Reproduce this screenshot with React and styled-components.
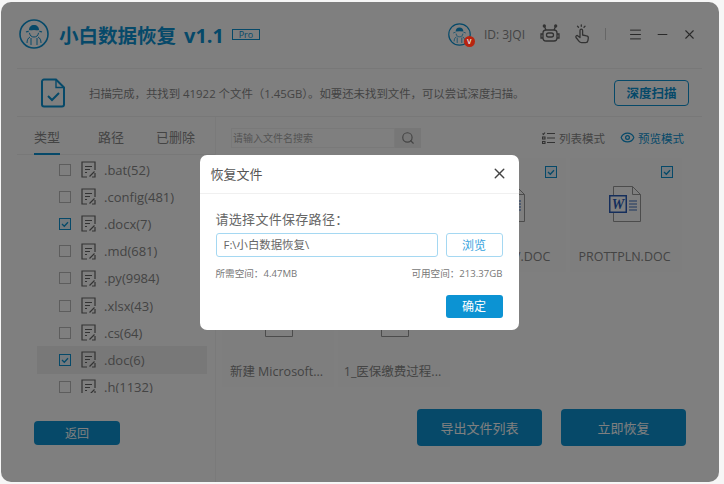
import React from "react";
import styled, { createGlobalStyle } from "styled-components";
import { Menu, Minus, X, Eye, Search } from "lucide-react";

const BLUE = "#0c93d3";
const FONT = `"Open Sans", "Noto Sans CJK SC", sans-serif`;

const GlobalStyle = createGlobalStyle`
  html, body {
    margin: 0;
    background: #f6f6f6;
    font-family: ${FONT};
  }
  * { box-sizing: border-box; }
`;

const Page = styled.div`
  width: 724px;
  height: 484px;
  padding: 2px 0 0 1px;
  overflow: hidden;
`;

const Window = styled.div`
  position: relative;
  width: 718px;
  height: 480px;
  padding: 0 17px 0 16px;
  background: #fff;
  border-radius: 10px;
  overflow: hidden;
`;

const Header = styled.header`
  display: flex;
  align-items: center;
  height: 67px;
  padding: 0 5px 2px 2px;
  border-bottom: 1px solid #f0f0f0;
`;

const Title = styled.h1`
  margin: 0 0 0 10px;
  font-size: 19.5px;
  font-weight: 700;
  color: ${BLUE};
  white-space: nowrap;
`;

const Version = styled.span`
  margin-left: 8px;
  font-size: 20px;
`;

const ProBadge = styled.span`
  margin-left: 8px;
  width: 28px;
  height: 11px;
  border: 1px solid ${BLUE};
  color: ${BLUE};
  font-size: 9px;
  line-height: 9px;
  text-align: center;
`;

const HeaderRight = styled.div`
  display: flex;
  align-items: center;
  margin-left: auto;
  color: #555;
`;

const Avatar = styled.div`
  position: relative;
  width: 23px;
  height: 23px;
`;

const AvatarBadge = styled.span`
  position: absolute;
  right: -4px;
  bottom: -1px;
  z-index: 2;
  width: 11px;
  height: 11px;
  border-radius: 50%;
  background: #b8240f;
  color: #ddd;
  font-size: 7px;
  font-weight: 700;
  line-height: 11px;
  text-align: center;
`;

const UserId = styled.span`
  margin: 0 15px 0 13px;
  font-size: 12px;
  color: #888;
`;

const HeaderDivider = styled.span`
  width: 1px;
  height: 12px;
  margin: 0 22px 0 15px;
  background: #ccc;
`;

const ScanRow = styled.div`
  display: flex;
  align-items: center;
  height: 48px;
  padding: 0 13px 0 24px;
  border-bottom: 1px solid #f0f0f0;
`;

const ScanText = styled.span`
  margin-left: 24px;
  font-size: 11.4px;
  color: #888;
  white-space: nowrap;
`;

const DeepScan = styled.button`
  width: 75px;
  height: 26px;
  margin-left: auto;
  padding: 0;
  border: 1px solid ${BLUE};
  border-radius: 4px;
  background: #fff;
  color: ${BLUE};
  font: 700 12.5px ${FONT};
`;

const Body = styled.div`
  display: flex;
  height: 365px;
`;

const Sidebar = styled.aside`
  width: 199px;
  flex: none;
  border-right: 1px solid #f4f4f4;
`;

const Tabs = styled.div`
  display: grid;
  grid-template-columns: 64px 58px auto;
  justify-items: start;
  height: 38px;
  padding-left: 17px;
  border-bottom: 1px solid #f0f0f0;
`;

const Tab = styled.div`
  height: 38px;
  padding-top: 10px;
  font-size: 13px;
  line-height: 20px;
  color: #888;
  border-bottom: 2px solid ${(p) => (p.$active ? BLUE : "transparent")};
`;

const FileList = styled.div`
  height: 237px;
  margin-top: 1px;
  overflow: hidden;
`;

const FileRow = styled.div`
  display: flex;
  align-items: center;
  height: 27.2px;
  margin-left: 20px;
  width: 170px;
  padding-left: 22px;
  background: ${(p) => (p.$selected ? "#f1f1f1" : "transparent")};
`;

const Check = styled.span`
  display: flex;
  align-items: center;
  justify-content: center;
  width: 12px;
  height: 12px;
  flex: none;
  border: 1px solid ${(p) => (p.$on ? BLUE : "#bbb")};
  background: ${(p) => (p.$on ? "#e8f5fc" : "#fff")};
`;

const RowName = styled.span`
  margin-left: 8px;
  font-size: 13px;
  line-height: 12px;
  color: #888;
  white-space: nowrap;
`;

const BackButton = styled.button`
  display: block;
  width: 86px;
  height: 24px;
  margin: 28px 0 0 17px;
  padding: 0;
  border: none;
  border-radius: 4px;
  background: ${BLUE};
  color: #fff;
  font: 12px ${FONT};
`;

const Main = styled.main`
  flex: 1;
  min-width: 0;
`;

const Toolbar = styled.div`
  display: flex;
  align-items: center;
  height: 41px;
  padding: 0 18px 0 15px;
`;

const SearchBox = styled.div`
  display: flex;
  width: 190px;
  height: 20px;
`;

const SearchInput = styled.div`
  flex: 1;
  padding-left: 1px;
  border: 1px solid #f2f2f2;
  font-size: 10px;
  line-height: 18px;
  color: #aaa;
`;

const SearchButton = styled.div`
  display: flex;
  align-items: center;
  justify-content: center;
  width: 26px;
  background: #eee;
  color: #888;
`;

const ModeGroup = styled.div`
  display: flex;
  align-items: center;
  gap: 15px;
  margin-left: auto;
`;

const Mode = styled.span`
  display: flex;
  align-items: center;
  gap: 3px;
  font-size: 11.5px;
  color: ${(p) => (p.$active ? BLUE : "#888")};
`;

const Grid = styled.div`
  display: grid;
  grid-template-columns: repeat(4, 112px);
  grid-auto-rows: 114px;
  gap: 1px 4px;
  padding-left: 6px;
`;

const Card = styled.div`
  position: relative;
  display: flex;
  flex-direction: column;
  align-items: center;
  padding-top: 28px;
  background: #fdfdfd;
`;

const CardCheck = styled(Check)`
  position: absolute;
  top: 8px;
  right: 9px;
`;

const CardName = styled.span`
  margin: 26px 3px 0 0;
  font-size: 12.5px;
  line-height: 18px;
  color: #888;
  white-space: nowrap;
`;

const Actions = styled.div`
  display: flex;
  justify-content: flex-end;
  gap: 19px;
  margin-top: 22px;
  padding-right: 16px;
`;

const ActionButton = styled.button`
  width: 125px;
  height: 37px;
  padding: 0;
  border: none;
  border-radius: 4px;
  background: ${BLUE};
  color: #fff;
  font: 13px ${FONT};
`;

const Overlay = styled.div`
  position: absolute;
  inset: 0;
  display: flex;
  align-items: center;
  justify-content: center;
  padding-right: 2px;
  background: rgba(0, 0, 0, 0.5);
`;

const Dialog = styled.div`
  width: 319px;
  height: 175px;
  background: #fff;
  border-radius: 7px;
  overflow: hidden;
`;

const DialogHead = styled.div`
  display: flex;
  align-items: center;
  justify-content: space-between;
  height: 39px;
  padding: 0 11px;
  border-bottom: 1px solid #f0f0f0;
  font-size: 13px;
  color: #555;
`;

const DialogBody = styled.div`
  padding: 16px 16px 0;
`;

const FieldLabel = styled.div`
  font-size: 13px;
  letter-spacing: 0.3px;
  line-height: 18px;
  color: #666;
`;

const PathRow = styled.div`
  display: flex;
  gap: 8px;
  margin-top: 5px;
`;

const PathInput = styled.div`
  flex: 1;
  height: 24px;
  padding-left: 7px;
  border: 1px solid #a5d8f2;
  border-radius: 3px;
  font-size: 11.4px;
  line-height: 22px;
  color: #666;
`;

const BrowseButton = styled.button`
  width: 57px;
  height: 24px;
  padding: 0;
  border: 1px solid #a5d8f2;
  border-radius: 3px;
  background: #fff;
  color: #35a3de;
  font: 12px ${FONT};
`;

const SpaceRow = styled.div`
  display: flex;
  justify-content: space-between;
  margin-top: 10px;
  font-size: 9.6px;
  line-height: 14px;
  color: #777;
`;

const ConfirmRow = styled.div`
  display: flex;
  justify-content: flex-end;
  margin-top: 14px;
`;

const ConfirmButton = styled.button`
  width: 57px;
  height: 23px;
  padding: 0;
  border: none;
  border-radius: 3px;
  background: ${BLUE};
  color: #fff;
  font: 12px ${FONT};
`;

function Logo({ size = 30 }) {
  return (
    <svg width={size} height={size} viewBox="0 0 30 30" fill="none" style={{ flex: "none" }}>
      <circle cx="15" cy="15" r="14" stroke={BLUE} strokeWidth="1.6" />
      <path d="M7 13c2-1 3-1 4 0M23 13c-2-1-3-1-4 0" stroke={BLUE} strokeWidth="1.2" />
      <path d="M10 11c0-3 2-5 5-5s5 2 5 5c-3 1.6-7 1.6-10 0z" fill={BLUE} />
      <ellipse cx="15" cy="12.5" rx="5.5" ry="1.6" fill="#fff" />
      <path d="M10.5 14c.5 3 2.300 4 4.500 4s4-1 4.500-4" stroke={BLUE} strokeWidth="1" />
      <path d="M11 18c-2 1-3 3-3 6M19 18c2 1 3 3 3 6M12 19v7M18 19v7" stroke={BLUE} strokeWidth="1" />
    </svg>
  );
}

function RobotIcon() {
  return (
    <svg width="20" height="20" viewBox="0 0 20 20" fill="none" stroke="#666" strokeWidth="1.3">
      <rect x="3" y="6" width="14" height="11" rx="3" />
      <rect x="6.500" y="9" width="7" height="4" rx="2" />
      <path d="M6 6L4.500 2.500M14 6l1.500-3.500M3 10H1v4h2M17 10h2v4h-2" />
      <circle cx="4.300" cy="2" r="1" fill="#666" />
      <circle cx="15.700" cy="2" r="1" fill="#666" />
    </svg>
  );
}

function TapIcon() {
  return (
    <svg width="16" height="20" viewBox="0 0 16 20" fill="none" stroke="#666" strokeWidth="1.3" strokeLinejoin="round" strokeLinecap="round" style={{ marginLeft: 14 }}>
      <path d="M6 13.500V6.500a1.300 1.300 0 0 1 2.600 0V11l4 .8a2 2 0 0 1 1.700 2.200l-.4 2.600a2.300 2.300 0 0 1-2.300 2H7.500a3 3 0 0 1-2.400-1.200L2 13.500a1.300 1.300 0 0 1 2-1.600z" />
      <path d="M7.300 .8v1.500M3.500 2.200l1 1M11 2.200l-1 1" />
    </svg>
  );
}

function ScanFileIcon() {
  return (
    <svg width="24" height="30" viewBox="0 0 24 30" fill="none" stroke={BLUE} strokeWidth="2">
      <path d="M15 1.500H3a2 2 0 0 0-2 2v23a2 2 0 0 0 2 2h18a2 2 0 0 0 2-2V9.500z" />
      <path d="M15 1.500v8h8" strokeWidth="1.400" />
      <path d="M7 18l4 4 7-7" />
    </svg>
  );
}

function DocEditIcon() {
  return (
    <svg width="15" height="17" viewBox="0 0 15 17" fill="none" stroke="#666" strokeWidth="1.2" style={{ marginLeft: 10, flex: "none" }}>
      <path d="M6 16H1V1h13v8" />
      <path d="M4 5.500h7M4 8.500h5M4 11.500h2" />
      <path d="M8.500 15.500l5-5M14 12v4h-3" />
    </svg>
  );
}

function ListModeIcon() {
  return (
    <svg width="13" height="12" viewBox="0 0 13 12" fill="none" stroke="#666" strokeWidth="1.100" style={{ marginRight: 1 }}>
      <path d="M5 1.500h8M5 6h8M5 10.500h8" />
      <path d="M.5 1.500l1 1 1.500-2" />
      <rect x=".5" y="5" width="2.500" height="2" />
      <rect x=".5" y="9.500" width="2.500" height="2" />
    </svg>
  );
}

function CheckMark() {
  return (
    <svg width="10" height="10" viewBox="0 0 10 10" fill="none" stroke={BLUE} strokeWidth="1.300">
      <path d="M2 5l2.300 2.200L8 3.200" />
    </svg>
  );
}

function WordIcon() {
  return (
    <svg width="32" height="36" viewBox="0 0 32 36" fill="none" style={{ marginLeft: -3, flex: "none" }}>
      <path d="M4.500 .5h19l8 8v27h-27z" fill="#fff" stroke="#999" />
      <path d="M23.500 .5v8h8" stroke="#999" />
      <path d="M20 15h8M20 18h8M20 21h8M20 24h8" stroke="#3a6fc0" />
      <rect x="0" y="9" width="18" height="18" fill="#2a5cb8" />
      <rect x="1.500" y="10.500" width="15" height="15" fill="#fff" />
      <text x="9" y="23" fill="#2a5cb8" fontFamily="Liberation Serif, serif" fontSize="14" fontWeight="700" fontStyle="italic" textAnchor="middle">W</text>
    </svg>
  );
}

const FILE_TYPES = [
  { name: ".bat(52)" },
  { name: ".config(481)" },
  { name: ".docx(7)", on: true },
  { name: ".md(681)" },
  { name: ".py(9984)" },
  { name: ".xlsx(43)" },
  { name: ".cs(64)" },
  { name: ".doc(6)", on: true, selected: true },
  { name: ".h(1132)" },
];

const FILES = [
  { name: "PROTOCOL.DOC" },
  { name: "PROTDATA.DOC" },
  { name: "PROTREV.DOC" },
  { name: "PROTTPLN.DOC" },
  { name: "新建 Microsoft..." },
  { name: "1_医保缴费过程..." },
];

export default function App() {
  return (
    <Page>
      <GlobalStyle />
      <Window>
        <Header>
          <Logo />
          <Title>
            小白数据恢复<Version>v1.1</Version>
          </Title>
          <ProBadge>Pro</ProBadge>
          <HeaderRight>
            <Avatar>
              <Logo size={23} />
              <AvatarBadge>V</AvatarBadge>
            </Avatar>
            <UserId>ID: 3JQI</UserId>
            <RobotIcon />
            <TapIcon />
            <HeaderDivider />
            <Menu size={15} strokeWidth={1.6} />
            <Minus size={15} strokeWidth={1.8} style={{ marginLeft: 12 }} />
            <X size={15} strokeWidth={1.8} style={{ marginLeft: 12 }} />
          </HeaderRight>
        </Header>

        <ScanRow>
          <ScanFileIcon />
          <ScanText>扫描完成，共找到 41922 个文件（1.45GB）。如要还未找到文件，可以尝试深度扫描。</ScanText>
          <DeepScan>深度扫描</DeepScan>
        </ScanRow>

        <Body>
          <Sidebar>
            <Tabs>
              <Tab $active>类型</Tab>
              <Tab>路径</Tab>
              <Tab>已删除</Tab>
            </Tabs>
            <FileList>
              {FILE_TYPES.map((t) => (
                <FileRow key={t.name} $selected={t.selected}>
                  <Check $on={t.on}>{t.on && <CheckMark />}</Check>
                  <DocEditIcon />
                  <RowName>{t.name}</RowName>
                </FileRow>
              ))}
            </FileList>
            <BackButton>返回</BackButton>
          </Sidebar>

          <Main>
            <Toolbar>
              <SearchBox>
                <SearchInput>请输入文件名搜索</SearchInput>
                <SearchButton>
                  <Search size={14} />
                </SearchButton>
              </SearchBox>
              <ModeGroup>
                <Mode>
                  <ListModeIcon />
                  列表模式
                </Mode>
                <Mode $active>
                  <Eye size={15} />
                  预览模式
                </Mode>
              </ModeGroup>
            </Toolbar>
            <Grid>
              {FILES.map((f) => (
                <Card key={f.name}>
                  <CardCheck $on>
                    <CheckMark />
                  </CardCheck>
                  <WordIcon />
                  <CardName>{f.name}</CardName>
                </Card>
              ))}
            </Grid>
            <Actions>
              <ActionButton>导出文件列表</ActionButton>
              <ActionButton>立即恢复</ActionButton>
            </Actions>
          </Main>
        </Body>

        <Overlay>
          <Dialog>
            <DialogHead>
              恢复文件
              <X size={17} color="#444" strokeWidth={2} />
            </DialogHead>
            <DialogBody>
              <FieldLabel>请选择文件保存路径：</FieldLabel>
              <PathRow>
                <PathInput>F:\小白数据恢复\</PathInput>
                <BrowseButton>浏览</BrowseButton>
              </PathRow>
              <SpaceRow>
                <span>所需空间：4.47MB</span>
                <span>可用空间：213.37GB</span>
              </SpaceRow>
              <ConfirmRow>
                <ConfirmButton>确定</ConfirmButton>
              </ConfirmRow>
            </DialogBody>
          </Dialog>
        </Overlay>
      </Window>
    </Page>
  );
}
